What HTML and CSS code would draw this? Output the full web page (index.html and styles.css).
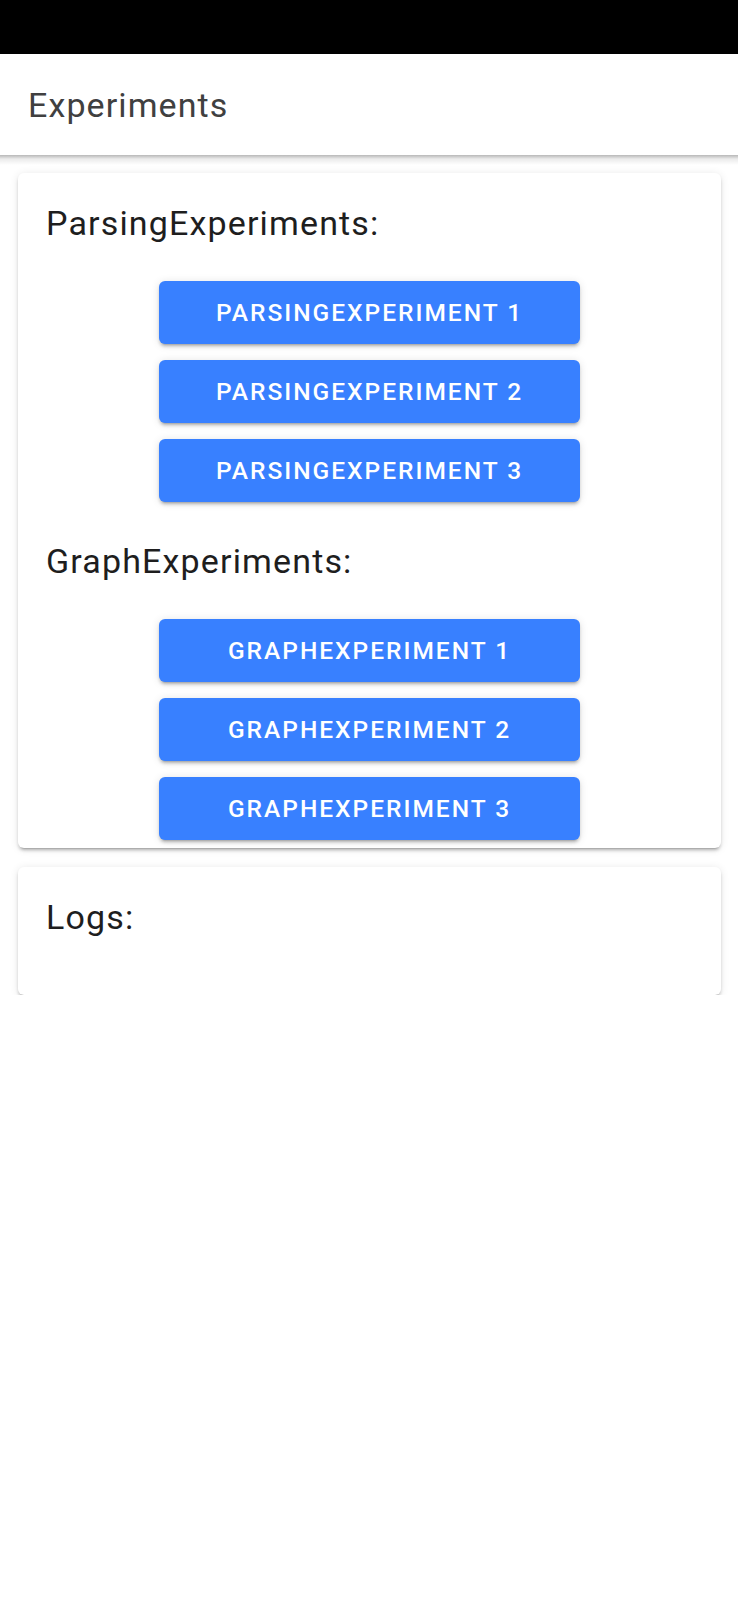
FILE: index.html
```html
<!DOCTYPE html>
<html lang="en">
<head>
<meta charset="utf-8">
<title>Experiments</title>
<link rel="stylesheet" href="styles.css">
</head>
<body>
<div class="statusbar"></div>
<header class="toolbar">
  <h1 class="title">Experiments</h1>
</header>
<main class="content">
  <section class="card">
    <h2 class="card-heading">ParsingExperiments:</h2>
    <div class="btn-list">
      <button class="btn">ParsingExperiment 1</button>
      <button class="btn">ParsingExperiment 2</button>
      <button class="btn">ParsingExperiment 3</button>
    </div>
    <h2 class="card-heading next">GraphExperiments:</h2>
    <div class="btn-list">
      <button class="btn">GraphExperiment 1</button>
      <button class="btn">GraphExperiment 2</button>
      <button class="btn">GraphExperiment 3</button>
    </div>
  </section>
  <section class="card logs">
    <h2 class="card-heading">Logs:</h2>
    <div class="log-output"></div>
  </section>
</main>
</body>
</html>
```
FILE: styles.css
```css
html, body {
  margin: 0;
  padding: 0;
  background: #ffffff;
  font-family: Roboto, "Liberation Sans", Arial, sans-serif;
}

.statusbar {
  height: 54px;
  background: #000000;
}

.toolbar {
  position: relative;
  height: 101px;
  display: flex;
  align-items: center;
  padding: 0 28px;
  background: #ffffff;
  box-sizing: border-box;
}

.toolbar::after {
  content: "";
  position: absolute;
  left: 0;
  right: 0;
  top: 100%;
  height: 10px;
  background: linear-gradient(to bottom, rgba(0,0,0,0.28), rgba(0,0,0,0.08) 40%, rgba(0,0,0,0));
}

.title {
  margin: 0;
  font-size: 34px;
  line-height: 38px;
  letter-spacing: 1.1px;
  font-weight: 400;
  color: #404040;
}

.content {
  display: flex;
  flex-direction: column;
  padding: 18px 17px 0 18px;
  gap: 19px;
}

.card {
  background: #ffffff;
  border-radius: 6px;
  padding: 31px 28px 8px 28px;
  box-shadow: 0 4px 2px -3px rgba(0,0,0,0.22), 0 3px 3px 0 rgba(0,0,0,0.15), 0 1px 8px 0 rgba(0,0,0,0.10);
}

.card-heading {
  margin: 0 0 39px 0;
  font-size: 34px;
  line-height: 38px;
  letter-spacing: 1.15px;
  font-weight: 400;
  color: #1e1e1e;
}

.card-heading.next {
  margin-top: 40px;
}

.btn-list {
  display: flex;
  flex-direction: column;
  align-items: center;
  gap: 16px;
}

.btn {
  width: 421px;
  height: 63px;
  border: none;
  border-radius: 6px;
  background: #3880ff;
  color: #ffffff;
  font-family: Roboto, "Liberation Sans", Arial, sans-serif;
  font-size: 24.5px;
  font-weight: 500;
  letter-spacing: 2px;
  text-transform: uppercase;
  padding: 0;
  box-shadow: 0 4px 2px -3px rgba(0,0,0,0.2), 0 3px 3px 0 rgba(0,0,0,0.14), 0 1px 8px 0 rgba(0,0,0,0.12);
}

.logs .card-heading {
  margin-bottom: 39px;
}

.log-output {
  min-height: 12px;
}
```
